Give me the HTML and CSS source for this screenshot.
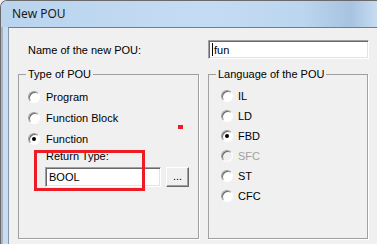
FILE: index.html
```html
<!DOCTYPE html>
<html lang="en">
<head>
    <meta charset="UTF-8">
    <meta name="viewport" content="width=device-width, initial-scale=1.0">
    <title>New POU</title>
    <link rel="stylesheet" href="styles.css">
</head>
<body>
    <div class="window">
        <div class="titlebar">New POU</div>
        <div class="client">
            <div class="name-row">
                <label class="name-label">Name of the new POU:</label>
                <div class="textbox name-box"><span class="caret"></span>fun</div>
            </div>

            <div class="groups">
                <fieldset class="group group-type">
                    <legend>Type of POU</legend>
                    <div class="radio-list">
                        <div class="radio-row"><span class="radio"></span>Program</div>
                        <div class="radio-row"><span class="radio"></span>Function Block</div>
                        <div class="radio-row"><span class="radio checked"></span>Function</div>
                        <span class="marker"></span>
                    </div>
                    <div class="return-type">
                        <div class="return-label">Return Type:</div>
                        <div class="return-row">
                            <div class="textbox type-box">BOOL</div>
                            <div class="button">...</div>
                        </div>
                        <div class="highlight"></div>
                    </div>
                </fieldset>

                <fieldset class="group group-lang">
                    <legend>Language of the POU</legend>
                    <div class="radio-list lang-list">
                        <div class="radio-row"><span class="radio"></span>IL</div>
                        <div class="radio-row"><span class="radio"></span>LD</div>
                        <div class="radio-row"><span class="radio checked"></span>FBD</div>
                        <div class="radio-row disabled"><span class="radio"></span>SFC</div>
                        <div class="radio-row"><span class="radio"></span>ST</div>
                        <div class="radio-row"><span class="radio"></span>CFC</div>
                    </div>
                </fieldset>
            </div>
        </div>
    </div>
</body>
</html>
```

FILE: styles.css
```css
* {
    box-sizing: border-box;
    margin: 0;
    padding: 0;
}

body {
    background-color: #f0f0f0;
    font-family: 'Liberation Sans', Arial, sans-serif;
    font-size: 11px;
    color: #000;
}

.window {
    width: 377px;
    height: 244px;
    display: flex;
    flex-direction: column;
    overflow: hidden;
    border-top-left-radius: 7px;
    border-left: 1px solid #6a6a6a;
    border-top: 1px solid #6a6a6a;
    background: linear-gradient(to right, #a9b4c0 0 2px, #c6ddf4 2px);
}

.titlebar {
    height: 26px;
    flex-shrink: 0;
    padding-left: 11px;
    line-height: 25px;
    font-family: 'Noto Sans', 'Open Sans', sans-serif;
    font-size: 12px;
    color: #1a1a1a;
    background: linear-gradient(to right, #bad4ee 0%, #c4dcf3 55%, #bcd6ef 80%, #a7c3e0 93%, #c6dcf1 100%);
}

.client {
    flex: 1;
    margin-left: 7px;
    border-left: 1px solid #8795a6;
    border-top: 1px solid #6e7e91;
    background-color: #f0f0f0;
    padding: 12px 8px 0 9px;
}

/* name row */

.name-row {
    display: flex;
    align-items: center;
    height: 19px;
}

.name-label {
    margin-left: 10px;
    margin-top: 1px;
}

.textbox {
    background-color: #fff;
    border: 1px solid;
    border-color: #a0a0a0 #fff #fff #a0a0a0;
    box-shadow: inset 1px 1px 0 #696969, inset -1px -1px 0 #e3e3e3;
    display: flex;
    align-items: center;
    padding-left: 3px;
}

.name-box {
    margin-left: auto;
    width: 161px;
    height: 19px;
    padding-left: 3px;
}

.caret {
    display: inline-block;
    width: 1px;
    height: 13px;
    background-color: #000;
    margin-right: 1px;
}

/* group boxes */

.groups {
    display: flex;
    gap: 9px;
    margin-top: 9px;
}

.group {
    height: 171px;
    border: 1px solid #a0a0a0;
    box-shadow: 1px 1px 0 #fff;
    padding-top: 5px;
}

.group legend {
    line-height: 13px;
    padding: 0 2px;
}

.group-type {
    width: 181px;
    padding-left: 9px;
}

.group-type legend {
    margin-left: -2px;
}

.group-lang {
    width: 160px;
    padding-left: 12px;
}

.group-lang legend {
    margin-left: -5px;
}

.radio-list {
    position: relative;
}

.radio-row {
    display: flex;
    align-items: center;
    height: 21px;
}

.lang-list .radio-row {
    height: 20px;
}

.radio {
    width: 12px;
    height: 12px;
    border-radius: 50%;
    background-color: #fff;
    border: 1px solid;
    border-color: #a0a0a0 #fff #fff #a0a0a0;
    box-shadow: inset 1px 1px 0 #696969;
    margin-right: 6px;
    position: relative;
    flex-shrink: 0;
}

.lang-list .radio {
    margin-right: 5px;
}

.radio.checked::after {
    content: '';
    position: absolute;
    left: 3px;
    top: 3px;
    width: 4px;
    height: 4px;
    border-radius: 50%;
    background-color: #000;
}

.disabled {
    color: #a0a0a0;
}

.disabled .radio {
    background-color: #f0f0f0;
}

.marker {
    position: absolute;
    left: 150px;
    top: 39px;
    width: 5px;
    height: 4px;
    background-color: #ed1c24;
}

/* return type */

.return-type {
    position: relative;
    margin-top: 1px;
    margin-left: 17px;
}

.return-label {
    line-height: 13px;
    padding-left: 1px;
}

.return-row {
    display: flex;
    gap: 5px;
    margin-top: 4px;
}

.type-box {
    width: 116px;
    height: 20px;
}

.button {
    width: 23px;
    height: 20px;
    border: 1px solid;
    border-color: #fff #696969 #696969 #fff;
    box-shadow: inset -1px -1px 0 #a0a0a0;
    text-align: center;
    line-height: 17px;
}

.highlight {
    position: absolute;
    left: -11px;
    top: 0;
    width: 111px;
    height: 41px;
    border: 3px solid #ed1c24;
}
```
